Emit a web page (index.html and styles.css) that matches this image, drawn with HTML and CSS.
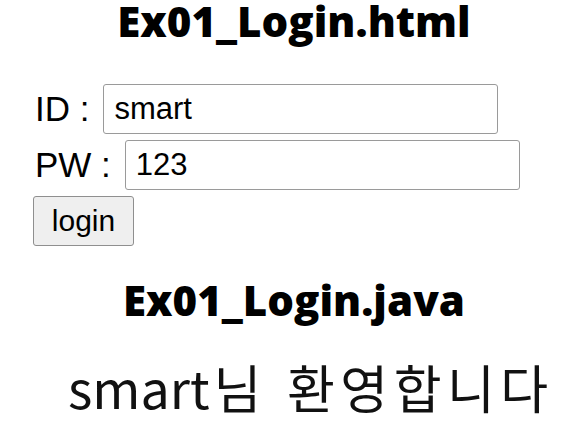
FILE: index.html
```html
<!DOCTYPE html>
<html lang="ko">
<head>
<meta charset="utf-8">
<title>Ex01_Login</title>
<link rel="stylesheet" href="styles.css">
</head>
<body>
<div class="page">
  <h1 class="title">Ex01_Login.html</h1>
  <form class="login-form">
    <div class="row">
      <label class="label" for="id">ID :</label>
      <input class="field" id="id" type="text" value="smart">
    </div>
    <div class="row">
      <label class="label" for="pw">PW :</label>
      <input class="field" id="pw" type="text" value="123">
    </div>
    <div class="row">
      <button class="btn" type="button">login</button>
    </div>
  </form>
  <h1 class="title title-2">Ex01_Login.java</h1>
  <p class="welcome">smart<span class="ko">님 환영합니다</span></p>
</div>
</body>
</html>
```
FILE: styles.css
```css
html, body {
  margin: 0;
  padding: 0;
  background: #fff;
}
.page {
  width: 563px;
  height: 428px;
  overflow: hidden;
  display: flex;
  flex-direction: column;
}
.title {
  margin: 0;
  padding-left: 25px;
  text-align: center;
  font-family: "Open Sans", "Noto Sans", sans-serif;
  font-weight: 800;
  font-size: 42px;
  line-height: 42px;
  color: #000;
  letter-spacing: 0;
}
.login-form {
  margin: 42px 0 0 0;
  padding-left: 33px;
  display: flex;
  flex-direction: column;
  gap: 6px;
}
.row {
  display: flex;
  align-items: center;
  gap: 14px;
}
.label {
  font-family: "Liberation Sans", Arial, sans-serif;
  font-size: 35px;
  color: #000;
  padding-left: 2px;
}
.field {
  box-sizing: border-box;
  width: 395px;
  height: 50px;
  margin: 0;
  padding: 0 10px;
  border: 1.5px solid #9a9a9a;
  border-radius: 3px;
  font-family: "Liberation Sans", Arial, sans-serif;
  font-size: 31px;
  color: #000;
  background: #fff;
}
.btn {
  box-sizing: border-box;
  width: 101px;
  height: 50px;
  margin: 0;
  padding: 0;
  border: 1.5px solid #8f8f8f;
  border-radius: 3px;
  background: #efefef;
  font-family: "Liberation Sans", Arial, sans-serif;
  font-size: 30px;
  color: #000;
}
.title-2 {
  margin-top: 33px;
}
.welcome {
  margin: 34px 0 0 68px;
  font-family: "Noto Sans CJK KR", "Noto Sans", sans-serif;
  font-size: 52px;
  line-height: 64px;
  color: #111;
}
.ko {
  margin-left: 4px;
  letter-spacing: 5.5px;
}
```
